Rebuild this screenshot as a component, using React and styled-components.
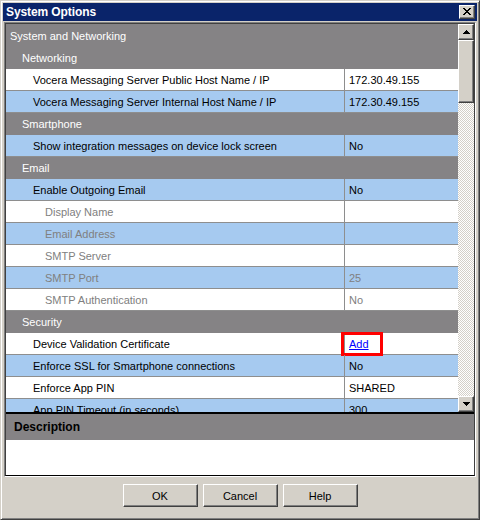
import React from 'react';
import styled, { createGlobalStyle } from 'styled-components';

const Global = createGlobalStyle`
  html, body { margin: 0; padding: 0; background: #d4d0c8; }
  body { font-family: "Liberation Sans", Arial, sans-serif; font-size: 11px; color: #000; }
  * { box-sizing: border-box; }
`;

const Window = styled.div`
  width: 480px;
  height: 520px;
  background: #d4d0c8;
  border: 1px solid;
  border-color: #d4d0c8 #404040 #404040 #d4d0c8;
  box-shadow: inset 1px 1px 0 #fff, inset -1px -1px 0 #808080;
  padding: 2px;
  display: flex;
  flex-direction: column;
`;

const TitleBar = styled.div`
  height: 18px;
  flex: none;
  background: #0a246a;
  display: flex;
  align-items: center;
  justify-content: space-between;
  padding: 0 2px 0 3px;
`;

const TitleText = styled.span`
  color: #fff;
  font-weight: bold;
  font-size: 12px;
  letter-spacing: -0.1px;
`;

const raised = `
  background: #d4d0c8;
  border: 1px solid;
  border-color: #fff #404040 #404040 #fff;
  box-shadow: inset -1px -1px 0 #808080, inset 1px 1px 0 #d4d0c8;
`;

const CloseButton = styled.div`
  ${raised}
  width: 16px;
  height: 14px;
  display: flex;
  align-items: center;
  justify-content: center;
  padding-bottom: 1px;
`;

const Panel = styled.div`
  margin: 1px 1px 0 1px;
  height: 455px;
  flex: none;
  border: 1px solid;
  border-color: #808080 #fff #fff #808080;
  display: flex;
`;

const PanelInner = styled.div`
  flex: 1;
  border: 1px solid;
  border-color: #404040 #404040 #000 #404040;
  display: flex;
  flex-direction: column;
  min-width: 0;
`;

const Grid = styled.div`
  height: 388px;
  flex: none;
  display: flex;
`;

const Rows = styled.div`
  flex: 1;
  min-width: 0;
  overflow: hidden;
  background: #858385;
  padding-top: 1px;
`;

const Row = styled.div`
  height: 22px;
  display: flex;
  align-items: stretch;
  border-bottom: 1px solid ${p => (p.$group ? '#858385' : '#8e8e8e')};
  background: ${p => (p.$group ? '#858385' : p.$alt ? '#a6caf0' : '#ffffff')};
  color: ${p => (p.$group ? '#ffffff' : p.$disabled ? '#808080' : '#000000')};
`;

const LabelCell = styled.div`
  width: ${p => (p.$full ? 'auto' : '338px')};
  flex: ${p => (p.$full ? '1' : 'none')};
  padding-left: ${p => p.$indent}px;
  display: flex;
  align-items: center;
  white-space: nowrap;
  overflow: hidden;
`;

const ValueCell = styled.div`
  flex: 1;
  border-left: 1px solid #8e8e8e;
  padding-left: 4px;
  display: flex;
  align-items: center;
  white-space: nowrap;
  position: relative;
`;

const Link = styled.span`
  color: #0000ff;
  text-decoration: underline;
`;

const Highlight = styled.div`
  position: absolute;
  left: -4px;
  top: -1px;
  width: 42px;
  height: 24px;
  border: 3px solid #ff0000;
  pointer-events: none;
`;

const ScrollBar = styled.div`
  width: 16px;
  flex: none;
  display: flex;
  flex-direction: column;
`;

const ScrollButton = styled.div`
  ${raised}
  width: 16px;
  height: 16px;
  flex: none;
  display: flex;
  align-items: center;
  justify-content: center;
`;

const Thumb = styled.div`
  ${raised}
  width: 16px;
  height: 63px;
  flex: none;
`;

const Track = styled.div`
  flex: 1;
  background-color: #fff;
  background-image: conic-gradient(#d4d0c8 25%, #fff 0 50%, #d4d0c8 0 75%, #fff 0);
  background-size: 2px 2px;
`;

const Splitter = styled.div`
  height: 2px;
  flex: none;
  background: #000;
`;

const DescHeader = styled.div`
  height: 26px;
  flex: none;
  background: #858385;
  display: flex;
  align-items: center;
  padding-left: 8px;
  font-weight: bold;
  font-size: 12px;
`;

const DescBody = styled.div`
  flex: 1;
  background: #fff;
`;

const ButtonBar = styled.div`
  flex: 1;
  display: flex;
  justify-content: center;
  align-items: flex-start;
  gap: 5px;
  padding-top: 7px;
`;

const Button = styled.div`
  ${raised}
  width: 75px;
  height: 23px;
  display: flex;
  align-items: center;
  justify-content: center;
  font-size: 11px;
`;

const indents = [4, 16, 27, 39];

const rows = [
  { group: true, label: 'System and Networking', level: 0 },
  { group: true, label: 'Networking', level: 1 },
  { label: 'Vocera Messaging Server Public Host Name / IP', value: '172.30.49.155', level: 2 },
  { label: 'Vocera Messaging Server Internal Host Name / IP', value: '172.30.49.155', level: 2 },
  { group: true, label: 'Smartphone', level: 1 },
  { label: 'Show integration messages on device lock screen', value: 'No', level: 2 },
  { group: true, label: 'Email', level: 1 },
  { label: 'Enable Outgoing Email', value: 'No', level: 2 },
  { label: 'Display Name', value: '', level: 3, disabled: true },
  { label: 'Email Address', value: '', level: 3, disabled: true },
  { label: 'SMTP Server', value: '', level: 3, disabled: true },
  { label: 'SMTP Port', value: '25', level: 3, disabled: true },
  { label: 'SMTP Authentication', value: 'No', level: 3, disabled: true },
  { group: true, label: 'Security', level: 1 },
  { label: 'Device Validation Certificate', value: 'Add', level: 2, link: true },
  { label: 'Enforce SSL for Smartphone connections', value: 'No', level: 2 },
  { label: 'Enforce App PIN', value: 'SHARED', level: 2 },
  { label: 'App PIN Timeout (in seconds)', value: '300', level: 2 },
];

const UpArrow = () => (
  <svg width="7" height="4" viewBox="0 0 7 4" shapeRendering="crispEdges">
    <path d="M3 0h1v1h1v1h1v1h1v1H0V3h1V2h1V1h1z" fill="#000" />
  </svg>
);

const DownArrow = () => (
  <svg width="7" height="4" viewBox="0 0 7 4" shapeRendering="crispEdges">
    <path d="M0 0h7v1H6v1H5v1H4v1H3V3H2V2H1V1H0z" fill="#000" />
  </svg>
);

const CloseGlyph = () => (
  <svg width="8" height="7" viewBox="0 0 8 7" shapeRendering="crispEdges">
    <path
      d="M0 0h2v1h1v1h2V1h1V0h2v1H7v1H6v1H5v1h1v1h1v1h1v1H6V6H5V5H3v1H2v1H0V6h1V5h1V4h1V3H2V2H1V1H0z"
      fill="#000"
    />
  </svg>
);

export default function App() {
  return (
    <>
      <Global />
      <Window>
        <TitleBar>
          <TitleText>System Options</TitleText>
          <CloseButton>
            <CloseGlyph />
          </CloseButton>
        </TitleBar>
        <Panel>
          <PanelInner>
            <Grid>
              <Rows>
                {rows.map((r, i) => (
                  <Row key={i} $group={r.group} $alt={i % 2 === 1} $disabled={r.disabled}>
                    <LabelCell $full={r.group} $indent={indents[r.level]}>
                      {r.label}
                    </LabelCell>
                    {!r.group && (
                      <ValueCell>
                        {r.link ? (
                          <>
                            <Link>{r.value}</Link>
                            <Highlight />
                          </>
                        ) : (
                          r.value
                        )}
                      </ValueCell>
                    )}
                  </Row>
                ))}
              </Rows>
              <ScrollBar>
                <ScrollButton>
                  <UpArrow />
                </ScrollButton>
                <Thumb />
                <Track />
                <ScrollButton>
                  <DownArrow />
                </ScrollButton>
              </ScrollBar>
            </Grid>
            <Splitter />
            <DescHeader>Description</DescHeader>
            <DescBody />
          </PanelInner>
        </Panel>
        <ButtonBar>
          <Button>OK</Button>
          <Button>Cancel</Button>
          <Button>Help</Button>
        </ButtonBar>
      </Window>
    </>
  );
}
